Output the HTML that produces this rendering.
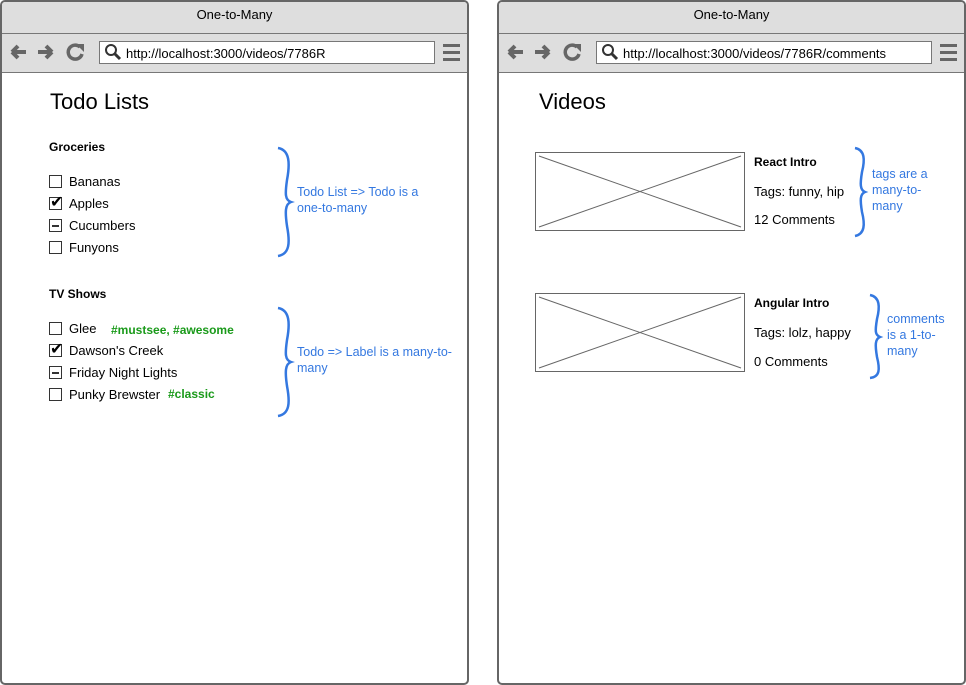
<!DOCTYPE html>
<html><head><style>
body{margin:0;width:966px;height:685px;background:#fff;position:relative;font-family:"Liberation Sans",sans-serif;color:#000;overflow:hidden}
.win{position:absolute;top:0;width:465px;height:681px;border:2px solid #666;border-radius:5px;box-sizing:content-box;background:#fff;overflow:hidden}
.tb{position:absolute;left:0;right:0;top:0;height:31px;background:#dedede;border-bottom:1px solid #777;text-align:center;font-size:13px;line-height:26px}
.nav{position:absolute;left:0;right:0;top:32px;height:38px;background:#dedede;border-bottom:1px solid #777}
.url{position:absolute;left:97px;top:7px;width:336px;height:23px;border:1px solid #777;background:#fff;font-size:13px;line-height:23px;box-sizing:border-box;padding-left:26px}
.a{position:absolute;font-size:13px;white-space:nowrap}
.h{font-size:22px}
.b{font-weight:bold;font-size:12px}
.cb{position:absolute;width:13px;height:13px;border:1px solid #333;box-sizing:border-box}
.blue{color:#3478e0;font-size:12.5px;line-height:16px;white-space:normal}
.g{color:#1a9a1a;font-weight:bold;font-size:12px}
</style></head><body>
<svg width="0" height="0" style="position:absolute"><defs>
<g id="icons">
<path d="M10,50 l6,-6 M10,50 l6,6 M10,50 h14" stroke="#666" stroke-width="4" fill="none"/>
<path d="M50,50 l-6,-6 M50,50 l-6,6 M50,50 h-14" stroke="#666" stroke-width="4" fill="none"/>
<path d="M78,45 A7,7 0 1 0 80,52" stroke="#666" stroke-width="3.5" fill="none"/><path d="M74,42 l8,0 l0,8z" fill="#666"/>
<rect x="441" y="42" width="17" height="3" fill="#666"/><rect x="441" y="49" width="17" height="3" fill="#666"/><rect x="441" y="56" width="17" height="3" fill="#666"/>
</g></defs></svg>

<div class="win" style="left:0">
<div class="tb">One-to-Many</div><div class="nav"><div class="url">http://localhost:3000/videos/7786R</div></div>
<svg width="469" height="80" style="position:absolute;left:0;top:0"><use href="#icons"/><circle cx="109" cy="48" r="5" stroke="#333" stroke-width="2" fill="none"/><path d="M113,52 l5,5" stroke="#333" stroke-width="3"/></svg>
<div class="a h" style="left:48px;top:87px">Todo Lists</div>
<div class="a b" style="left:47px;top:138px">Groceries</div>
<div class="cb" style="left:47px;top:173px"></div><div class="a" style="left:67px;top:172px">Bananas</div>
<div class="cb" style="left:47px;top:195px"></div><div class="a" style="left:48px;top:190px;font-size:16px">✔</div><div class="a" style="left:67px;top:194px">Apples</div>
<div class="cb" style="left:47px;top:217px"></div><div style="position:absolute;left:50px;top:223px;width:7px;height:1.5px;background:#333"></div><div class="a" style="left:67px;top:216px">Cucumbers</div>
<div class="cb" style="left:47px;top:239px"></div><div class="a" style="left:67px;top:238px">Funyons</div>
<div class="a b" style="left:47px;top:285px">TV Shows</div>
<div class="cb" style="left:47px;top:320px"></div><div class="a" style="left:67px;top:319px">Glee</div><div class="a g" style="left:109px;top:321px">#mustsee, #awesome</div>
<div class="cb" style="left:47px;top:342px"></div><div class="a" style="left:48px;top:337px;font-size:16px">✔</div><div class="a" style="left:67px;top:341px">Dawson's Creek</div>
<div class="cb" style="left:47px;top:364px"></div><div style="position:absolute;left:50px;top:370px;width:7px;height:1.5px;background:#333"></div><div class="a" style="left:67px;top:363px">Friday Night Lights</div>
<div class="cb" style="left:47px;top:386px"></div><div class="a" style="left:67px;top:385px">Punky Brewster</div><div class="a g" style="left:166px;top:385px">#classic</div>
<svg width="469" height="685" style="position:absolute;left:0;top:0" fill="none" stroke="#3478e0" stroke-width="2.5">
<path d="M276,146 C288,148 288,162 285,178 C283,192 283,198 289,200 C283,202 283,210 285,224 C288,240 288,252 276,254"/>
<path d="M276,306 C288,308 288,322 285,338 C283,352 283,358 289,360 C283,362 283,370 285,384 C288,400 288,412 276,414"/>
</svg>
<div class="a blue" style="left:295px;top:182px;width:142px">Todo List =&gt; Todo is a one-to-many</div>
<div class="a blue" style="left:295px;top:342px;width:160px">Todo =&gt; Label is a many-to-many</div>
</div>

<div class="win" style="left:497px">
<div class="tb">One-to-Many</div><div class="nav"><div class="url">http://localhost:3000/videos/7786R/comments</div></div>
<svg width="469" height="80" style="position:absolute;left:0;top:0"><use href="#icons"/><circle cx="109" cy="48" r="5" stroke="#333" stroke-width="2" fill="none"/><path d="M113,52 l5,5" stroke="#333" stroke-width="3"/></svg>
<div class="a h" style="left:40px;top:87px">Videos</div>
<svg width="469" height="685" style="position:absolute;left:0;top:0" fill="none">
<rect x="36.5" y="150.5" width="209" height="78" stroke="#666"/><path d="M40,154 L242,225 M40,225 L242,154" stroke="#666"/>
<rect x="36.5" y="291.5" width="209" height="78" stroke="#666"/><path d="M40,295 L242,366 M40,366 L242,295" stroke="#666"/>
<g stroke="#3478e0" stroke-width="2.5">
<path d="M356,146 C366,148 366,158 363,170 C361,182 361,188 366,190 C361,192 361,198 363,210 C366,222 366,232 356,234"/>
<path d="M371,293 C381,295 381,305 378,317 C376,329 376,333 381,335 C376,337 376,343 378,355 C381,367 381,375 371,376"/>
</g></svg>
<div class="a b" style="left:255px;top:153px">React Intro</div>
<div class="a" style="left:255px;top:182px">Tags: funny, hip</div>
<div class="a" style="left:255px;top:210px">12 Comments</div>
<div class="a b" style="left:255px;top:294px">Angular Intro</div>
<div class="a" style="left:255px;top:323px">Tags: lolz, happy</div>
<div class="a" style="left:255px;top:352px">0 Comments</div>
<div class="a blue" style="left:373px;top:164px;width:66px">tags are a many-to-many</div>
<div class="a blue" style="left:388px;top:309px;width:62px">comments is a 1-to-many</div>
</div>
</body></html>
